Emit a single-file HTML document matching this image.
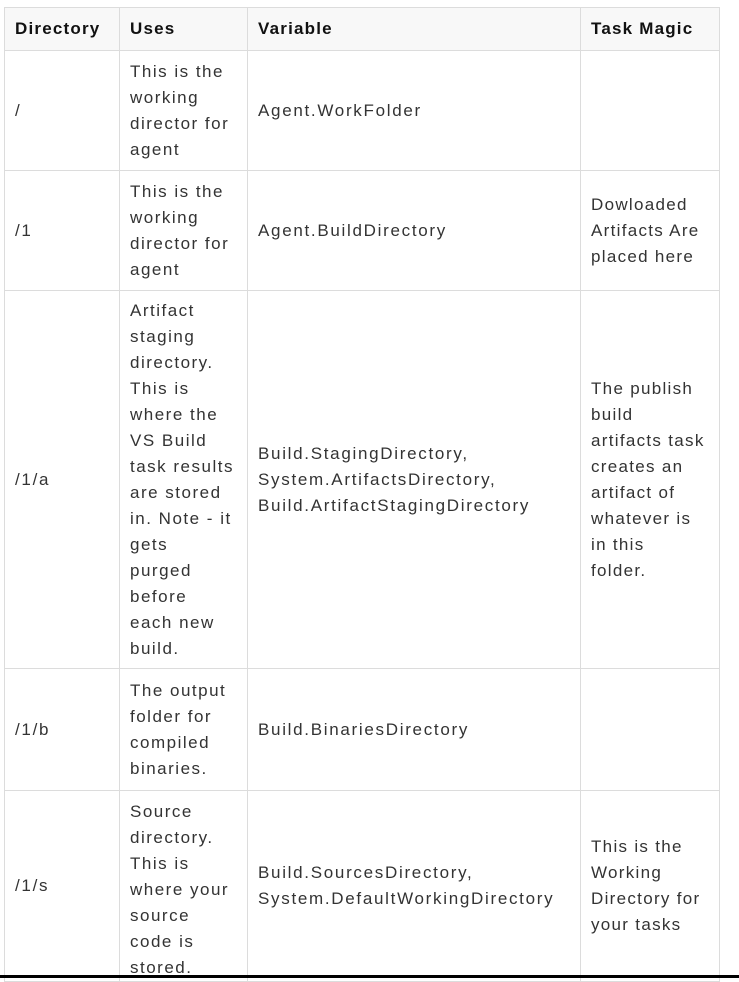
<!DOCTYPE html>
<html><head><style>
body{margin:0;background:#fff;width:739px;height:978px;overflow:hidden;position:relative;font-family:"Liberation Sans",sans-serif;}
table{position:absolute;left:4px;top:7px;border-collapse:collapse;table-layout:fixed;}
td,th{border:1.5px solid #dcdcdc;padding:0 10px;font-size:17px;line-height:26px;color:#333;text-align:left;vertical-align:middle;white-space:nowrap;letter-spacing:1.7px;overflow:hidden}
th{background:#f8f8f8;font-weight:bold;color:#111;height:42px;letter-spacing:1.2px}
td:nth-child(4){letter-spacing:1.3px}
td:nth-child(2){letter-spacing:1.5px}
.line{position:absolute;left:0;top:975px;width:739px;height:3px;background:#000}
</style></head><body>
<table>
<colgroup><col style="width:115px"><col style="width:128px"><col style="width:333px"><col style="width:139px"></colgroup>
<tr><th>Directory</th><th>Uses</th><th>Variable</th><th>Task Magic</th></tr>
<tr style="height:120px"><td>/</td><td>This is the<br>working<br>director for<br>agent</td><td>Agent.WorkFolder</td><td></td></tr>
<tr style="height:120px"><td>/1</td><td>This is the<br>working<br>director for<br>agent</td><td>Agent.BuildDirectory</td><td>Dowloaded<br>Artifacts Are<br>placed here</td></tr>
<tr style="height:378px"><td>/1/a</td><td>Artifact<br>staging<br>directory.<br>This is<br>where the<br>VS Build<br>task results<br>are stored<br>in. Note - it<br>gets<br>purged<br>before<br>each new<br>build.</td><td>Build.StagingDirectory,<br>System.ArtifactsDirectory,<br>Build.ArtifactStagingDirectory</td><td>The publish<br>build<br>artifacts task<br>creates an<br>artifact of<br>whatever is<br>in this<br>folder.</td></tr>
<tr style="height:122px"><td>/1/b</td><td>The output<br>folder for<br>compiled<br>binaries.</td><td>Build.BinariesDirectory</td><td></td></tr>
<tr style="height:190px"><td>/1/s</td><td style="vertical-align:top;padding-top:8px">Source<br>directory.<br>This is<br>where your<br>source<br>code is<br>stored.</td><td>Build.SourcesDirectory,<br>System.DefaultWorkingDirectory</td><td>This is the<br>Working<br>Directory for<br>your tasks</td></tr>
</table>
<div class="line"></div>
</body></html>
